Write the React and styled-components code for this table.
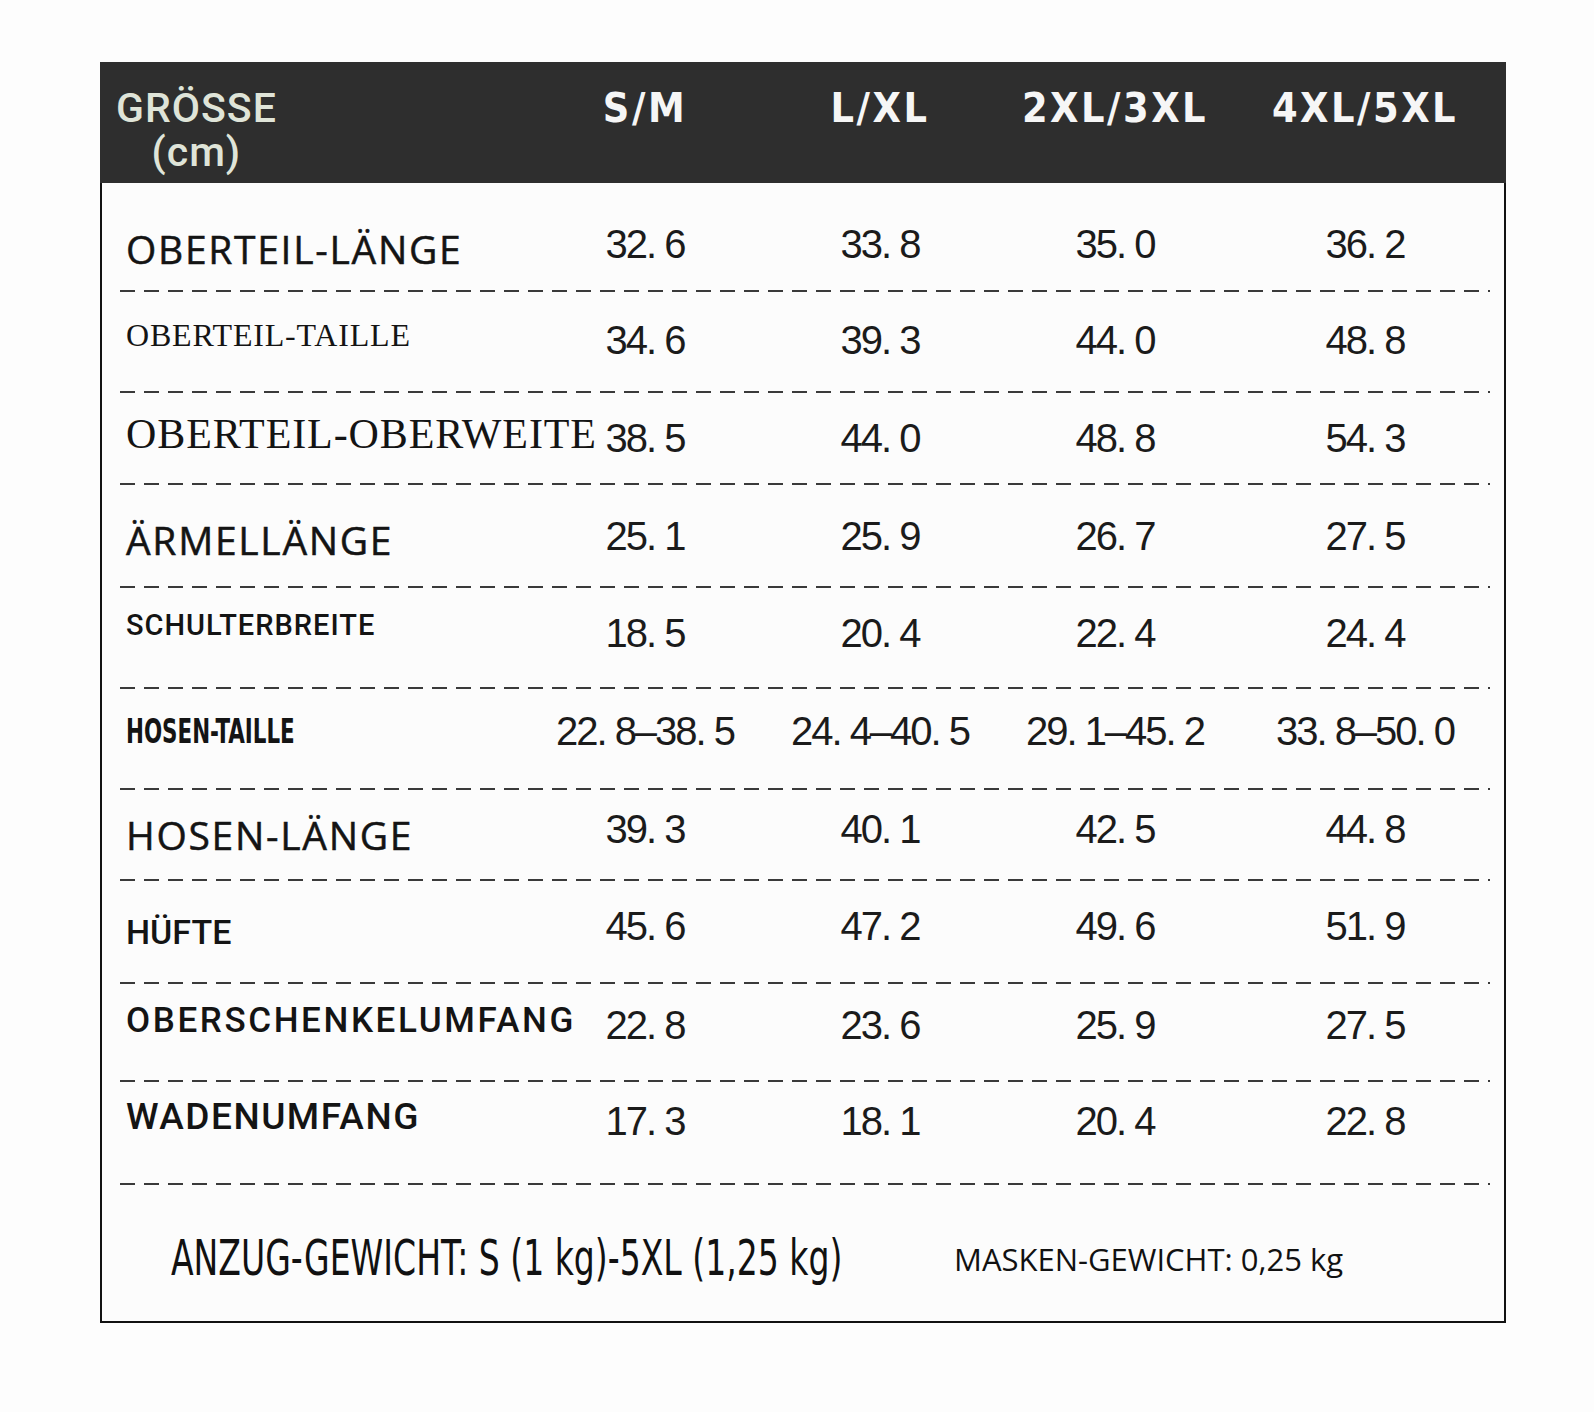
import React from "react";
import styled, { createGlobalStyle, css } from "styled-components";

const GlobalStyle = createGlobalStyle`
  html, body {
    margin: 0;
    padding: 0;
    background: #fdfdfd;
  }
  body {
    font-family: "Liberation Sans", Arial, sans-serif;
    color: #151515;
  }
`;

const sizes = ["S/M", "L/XL", "2XL/3XL", "4XL/5XL"];

// h = row height incl. dashed line, ly / ny = vertical nudge of label / numbers
const rows = [
  { label: "OBERTEIL-LÄNGE", kind: "sans", h: 109, ly: 12, ny: 7.5, values: ["32. 6", "33. 8", "35. 0", "36. 2"] },
  { label: "OBERTEIL-TAILLE", kind: "serifSmall", h: 101, ly: -6.5, ny: -2, values: ["34. 6", "39. 3", "44. 0", "48. 8"] },
  { label: "OBERTEIL-OBERWEITE", kind: "serif", h: 92, ly: -4, ny: 0, values: ["38. 5", "44. 0", "48. 8", "54. 3"] },
  { label: "ÄRMELLÄNGE", kind: "sans", h: 103, ly: 4.5, ny: 0, values: ["25. 1", "25. 9", "26. 7", "27. 5"] },
  { label: "SCHULTERBREITE", kind: "bold", h: 101, ly: -13, ny: -4.5, values: ["18. 5", "20. 4", "22. 4", "24. 4"] },
  { label: "HOSEN-TAILLE", kind: "narrow", h: 101, ly: -7.5, ny: -7.5, values: ["22. 8–38. 5", "24. 4–40. 5", "29. 1–45. 2", "33. 8–50. 0"] },
  { label: "HOSEN-LÄNGE", kind: "sans", h: 91, ly: 0, ny: -6, values: ["39. 3", "40. 1", "42. 5", "44. 8"] },
  { label: "HÜFTE", kind: "din", h: 103, ly: 0, ny: -5.5, values: ["45. 6", "47. 2", "49. 6", "51. 9"] },
  { label: "OBERSCHENKELUMFANG", kind: "dinBold", h: 98, ly: -11, ny: -7, values: ["22. 8", "23. 6", "25. 9", "27. 5"] },
  { label: "WADENUMFANG", kind: "dinWide", h: 103, ly: -16, ny: -11.5, values: ["17. 3", "18. 1", "20. 4", "22. 8"] },
];

const shift = (s) => (s >= 0 ? `padding-top: ${s * 2}px;` : `padding-bottom: ${-s * 2}px;`);

const labelStyles = {
  sans: css`
    font-family: "Open Sans", "Noto Sans", sans-serif;
    font-weight: 400;
    font-size: 39px;
    letter-spacing: 1.7px;
    -webkit-text-stroke: 0.5px currentColor;
  `,
  serifSmall: css`
    font-family: "Liberation Serif", "DejaVu Serif", serif;
    font-size: 32px;
    letter-spacing: 0.8px;
  `,
  serif: css`
    font-family: "Liberation Serif", "DejaVu Serif", serif;
    font-size: 42px;
    letter-spacing: 0.9px;
  `,
  bold: css`
    font-family: Roboto, "Liberation Sans", sans-serif;
    font-weight: 500;
    font-size: 29px;
    letter-spacing: 1px;
  `,
  narrow: css`
    font-family: "DejaVu Sans Condensed", "Liberation Sans", sans-serif;
    font-weight: 700;
    font-size: 34px;
  `,
  din: css`
    font-family: Roboto, "Liberation Sans", sans-serif;
    font-weight: 500;
    font-size: 34px;
  `,
  dinBold: css`
    font-family: Roboto, "Liberation Sans", sans-serif;
    font-weight: 500;
    font-size: 35px;
    letter-spacing: 2.6px;
  `,
  dinWide: css`
    font-family: Roboto, "Liberation Sans", sans-serif;
    font-weight: 500;
    font-size: 37px;
    letter-spacing: 1.5px;
  `,
};

const Page = styled.div`
  padding: 62px 0 0 100px;
`;

const Table = styled.div`
  width: 1406px;
`;

const Head = styled.div`
  height: 121px;
  background: #2e2e2e;
  display: grid;
  grid-template-columns: 428px 234px 236px 234px 266px;
  align-items: start;
  padding-top: 24px;
  box-sizing: border-box;
`;

const HeadLabel = styled.div`
  padding-left: 16px;
  display: flex;
  flex-direction: column;
  align-items: center;
  width: max-content;
  font-family: Roboto, "Liberation Sans", sans-serif;
  font-weight: 500;
  font-size: 41px;
  letter-spacing: 1px;
  line-height: 44px;
  color: #dfe4d8;
`;

const HeadSize = styled.div`
  text-align: center;
  font-family: "DejaVu Sans Condensed", "Liberation Sans", sans-serif;
  font-weight: 700;
  font-size: 41px;
  letter-spacing: 2.5px;
  line-height: 44px;
  color: #f6f6f6;
  white-space: nowrap;
`;

const Body = styled.div`
  border: 2px solid #121212;
  border-top: none;
  background: #fcfcfc;
`;

const Row = styled.div`
  height: ${(p) => p.$h}px;
  display: flex;
  flex-direction: column;
`;

const Cells = styled.div`
  flex: 1;
  display: grid;
  grid-template-columns: 426px 234px 236px 234px 266px;
  align-items: center;
`;

const Label = styled.div`
  padding-left: 24px;
  white-space: nowrap;
  line-height: 40px;
  color: #141414;
  ${(p) => labelStyles[p.$kind]}
  ${(p) => shift(p.$dy)}
`;

const Squeeze = styled.span`
  display: inline-block;
  transform: scaleX(${(p) => p.$x});
  transform-origin: left center;
`;

const Value = styled.div`
  text-align: center;
  font-family: "Liberation Sans", Arial, sans-serif;
  font-size: 40px;
  letter-spacing: -2px;
  line-height: 40px;
  color: #1b1b1b;
  white-space: nowrap;
  ${(p) => shift(p.$dy)}
`;

const Dash = styled.div`
  height: 2px;
  margin: 0 14px 0 18px;
  background: repeating-linear-gradient(to right, #3a3a3a 0 15px, transparent 15px 24px);
`;

const Footer = styled.div`
  height: 136px;
  display: grid;
  grid-template-columns: 783px 1fr;
  align-items: center;
  padding: 12px 0 0 69px;
  box-sizing: border-box;
`;

const SuitWeight = styled.div`
  font-family: "DejaVu Sans Condensed", "Liberation Sans", sans-serif;
  font-size: 49px;
  line-height: 60px;
  color: #111;
  white-space: nowrap;
`;

const MaskWeight = styled.div`
  font-family: "Open Sans", "Noto Sans", sans-serif;
  font-size: 31px;
  line-height: 40px;
  color: #111;
  white-space: nowrap;
`;

export default function App() {
  return (
    <Page>
      <GlobalStyle />
      <Table>
        <Head>
          <HeadLabel>
            <span>GRÖSSE</span>
            <span>(cm)</span>
          </HeadLabel>
          {sizes.map((s) => (
            <HeadSize key={s}>{s}</HeadSize>
          ))}
        </Head>
        <Body>
          {rows.map((r) => (
            <Row key={r.label} $h={r.h}>
              <Cells>
                <Label $kind={r.kind} $dy={r.ly}>
                  {r.kind === "narrow" ? <Squeeze $x={0.7}>{r.label}</Squeeze> : r.label}
                </Label>
                {r.values.map((v, i) => (
                  <Value key={i} $dy={r.ny}>
                    {v}
                  </Value>
                ))}
              </Cells>
              <Dash />
            </Row>
          ))}
          <Footer>
            <SuitWeight>
              <Squeeze $x={0.75}>ANZUG-GEWICHT: S (1 kg)-5XL (1,25 kg)</Squeeze>
            </SuitWeight>
            <MaskWeight>MASKEN-GEWICHT: 0,25 kg</MaskWeight>
          </Footer>
        </Body>
      </Table>
    </Page>
  );
}
